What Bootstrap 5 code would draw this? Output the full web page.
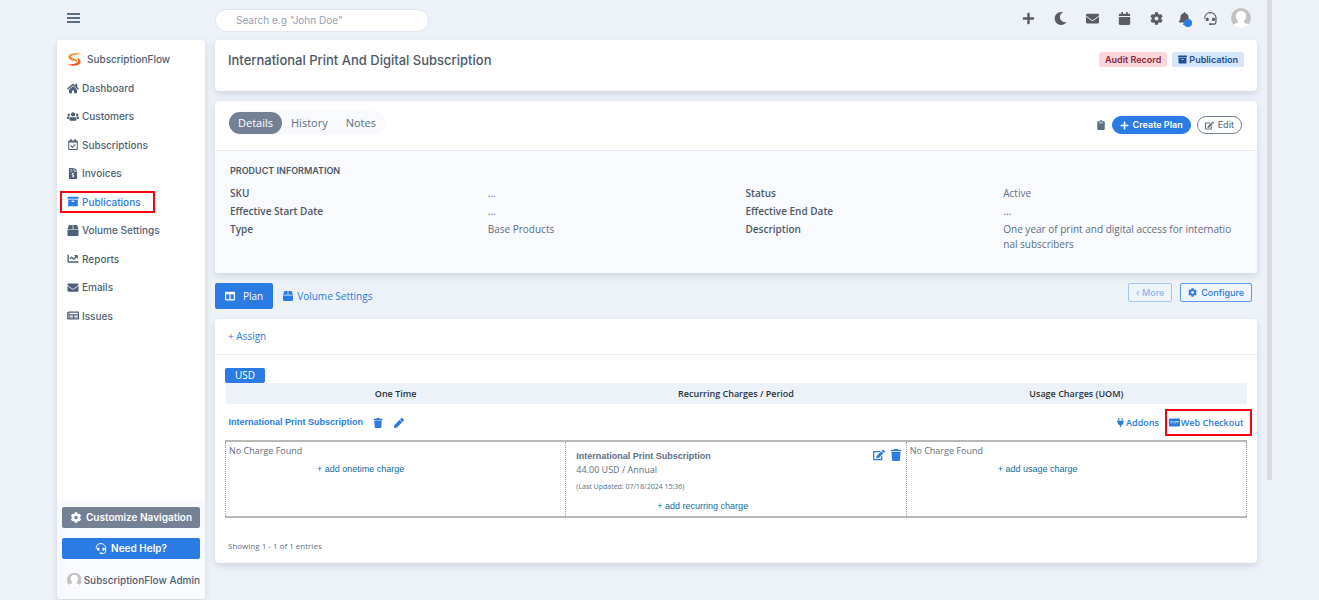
<!DOCTYPE html>
<html lang="en">
<head>
<meta charset="utf-8">
<meta name="viewport" content="width=device-width, initial-scale=1">
<title>SubscriptionFlow</title>
<link rel="stylesheet" href="https://cdn.jsdelivr.net/npm/bootstrap@5.3.0/dist/css/bootstrap.min.css">
<script defer src="https://cdn.jsdelivr.net/npm/bootstrap@5.3.0/dist/js/bootstrap.bundle.min.js"></script>
<style>
:root{--blue:#2a7be4;--ink:#4d5969;--slate:#748194;--head:Inter,"Open Sans",sans-serif}
body{background:#edf2f9;font:10px/15px "Open Sans","Noto Sans",sans-serif;color:#5e6e82}
a{text-decoration:none;color:var(--blue)}
.ic{width:1em;height:1em;fill:currentColor;flex:none;display:block}
.panel{background:#fff;border-radius:4px;box-shadow:0 3px 7px rgba(65,69,88,.16)}
.block{margin-top:10px}
.tiny{font-size:8px}
.arial{font-family:"Liberation Sans",Arial,sans-serif}
.marked{position:relative}
.marked::after{content:"";position:absolute;inset:-3px -14px -3px -7px;border:2px solid #f8000f;pointer-events:none}
.tool{border:0;background:none;padding:0;color:inherit}

/* page frame */
.shell{padding-left:57px;padding-right:47px;min-height:100vh}
.main-col{margin-left:10px;min-width:0}
.rail{flex:none;width:5px;height:80vh;background:#dcdcdc;margin-left:10px}

/* sidebar */
.side{width:148px;flex:none}
.burger{height:40px;padding:13px 10px;color:#5e6e82}
.burger span{display:block;width:13px;height:2px;margin-bottom:2px;background:currentColor}
.menu{font:500 10px/16px var(--head);color:#4f5f75}
.menu a{color:inherit}
.brand{height:38px;padding-left:10px;gap:5px}
.menu ul{min-height:247px;padding:2px 10px 0}
.menu li a{gap:3px}
.menu .ic{width:12px;height:11px}
.menu .marked{color:var(--blue)}
.foot{background:#f9fafd;border-radius:0 0 4px 4px;padding:7px 5px 8px;margin-top:175px}
.foot .blue{margin:10px 0 10px}
.fb{border:0;border-radius:2px;height:21px;color:#fff;font:600 10px/21px var(--head)}
.slate{background:var(--slate)}
.blue{background:var(--blue)}
.me{gap:2px;padding-left:5px;height:22px;white-space:nowrap}

/* top bar */
.topbar{height:40px;color:#5a5c60}
.topbar .ic{width:13px;height:13px}
.search{width:214px;height:23px;border:1px solid #dfe5ef;border-radius:12px;padding:0 20px;font:10px/20px var(--head);background:#fff}
.search::placeholder{color:#93a1b7;opacity:1}
.tools{gap:19px;padding:0 6px 4px 0}
.bellb{margin-left:-4px}
.bellb+.tool{margin-left:-6px}
.ava{margin-left:-5px}
.dot{position:absolute;right:-1px;bottom:-2px;width:8px;height:8px;border-radius:50%;background:var(--blue)}

/* title card */
.head{padding:11px 13px 22px}
.ttl{font:500 13px/18px var(--head);color:var(--ink)}
.tags{gap:5px;padding-top:1px}
.tag{border-radius:3px;padding:0 6px;height:15px;font:600 9px/15px var(--head)}
.tag .ic{width:9px;height:9px}
.tag.audit{background:#fad7dd;color:#932338}
.tag.pub{background:#d5e5fa;color:#1c4f93;gap:2px}

/* details card */
.dhead{padding:10px 15px 15px 14px}
.pills{background:#f9fafd;border-radius:13px;height:24px;padding:1px 0}
.pills button{border:0;background:none;color:#5e6e82;border-radius:12px;padding:0 9px;line-height:22px;font-size:11px}
.pills .on{background:var(--slate);color:#fff}
.acts{gap:6px;padding-top:4px;height:24px}
.round{border-radius:10px;height:18px;border:1px solid var(--slate);background:#fff;color:#67758a;padding:0 7px;font:500 9px/16px var(--head);gap:4px}
.round.go{background:var(--blue);border-color:var(--blue);color:#fff;font-weight:600}
.info{background:#f9fafd;border-top:1px solid #e6ebf5;border-radius:0 0 4px 4px;padding:12px 0 18px 15px}
.info h2{font:600 9px/15px var(--head);color:var(--ink);margin:0 0 8px}
.info dl{margin-right:-4px}
.info dt{font-weight:600;color:var(--ink)}
.info dd{margin:0;word-break:break-all;padding-right:26px}
.info .col-3{margin-bottom:3px}

/* tabs */
.tabs{gap:10px}
.plan{background:var(--blue);color:#fff;border-radius:2px;height:26px;padding:0 10px}
.cfg{padding-right:5px}
.sm{height:19px;border:1px solid #5d9bea;border-radius:2px;background:#f2f6fc;color:var(--blue);padding:0 7px;font:500 9px/17px var(--head)}

/* plan table */
.assign{padding:10px 13px;border-bottom:1px solid #e6ebf5}
.inner{padding:13px 10px 10px}
.usd{background:var(--blue);color:#fff;border-radius:2px;padding:0 10px;height:15px}
.grid{table-layout:fixed;width:100%;border-collapse:collapse}
.grid th{background:#edf2f9;color:#293340;font-size:9px;line-height:19px;text-align:center;font-weight:600}
.planrow{height:36px;padding:1px 3px 0;font-size:9px;font-weight:600}
.names{gap:9px}
.names .ic{width:12px;height:10px}
.links{gap:10px}
.links .ic{width:9px;margin-right:1px}
.links .wide{width:11px}
.checkout::after{inset:-6px -8px -6px -4px}
.charge{border-top:2px solid #b8b8b8;border-bottom:2px solid #b8b8b8;border-left:1px dotted #999;border-right:1px dotted #999;vertical-align:top;height:76px;padding:1px 3px;font-size:9px}
.add{border:0;background:none;padding:0;color:#0f6c9c;font:9px/14px "Liberation Sans",Arial,sans-serif}
.addrow{padding:3px 0 0 88px}
.mid{padding:7px 4px 0 10px;line-height:14px}
.mid .addrow{padding-left:81px}
.stamp{font-size:7px;line-height:19px}
.icons{gap:5px;font-size:12px}
.shown{margin-top:20px;padding-left:3px}
</style>
</head>
<body>
<svg width="0" height="0" class="position-absolute" aria-hidden="true"><defs>
<symbol id="plus" viewBox="0 0 448 512"><path d="M416 208H272V64c0-17.670-14.330-32-32-32h-32c-17.670 0-32 14.330-32 32v144H32c-17.670 0-32 14.330-32 32v32c0 17.670 14.330 32 32 32h144v144c0 17.670 14.330 32 32 32h32c17.670 0 32-14.330 32-32V304h144c17.670 0 32-14.330 32-32v-32c0-17.670-14.330-32-32-32z"/></symbol>
<symbol id="moon" viewBox="0 0 512 512"><path d="M283.211 512c78.962 0 151.079-35.925 198.857-94.792 7.068-8.708-.639-21.430-11.562-19.350-124.203 23.654-238.262-71.576-238.262-196.954 0-72.222 38.662-138.635 101.498-174.394 9.686-5.512 7.250-20.197-3.756-22.230A258.156 258.156 0 0 0 283.211 0c-141.309 0-256 114.511-256 256 0 141.309 114.511 256 256 256z"/></symbol>
<symbol id="mail" viewBox="0 0 512 512"><path d="M502.3 190.8c3.900-3.100 9.700-.2 9.700 4.700V400c0 26.500-21.500 48-48 48H48c-26.500 0-48-21.500-48-48V195.600c0-5 5.700-7.800 9.700-4.700 22.400 17.400 52.100 39.500 154.100 113.600 21.100 15.400 56.700 47.800 92.200 47.600 35.700.3 72-32.800 92.300-47.600 102-74.100 131.600-96.300 154-113.700zM256 320c23.200.4 56.600-29.200 73.400-41.400 132.700-96.300 142.800-104.700 173.400-128.700 5.800-4.500 9.200-11.500 9.200-18.900v-19c0-26.500-21.500-48-48-48H48c-26.500 0-48 21.500-48 48v19c0 7.400 3.400 14.300 9.200 18.900 30.600 23.900 40.700 32.400 173.400 128.700 16.800 12.200 50.200 41.800 73.400 41.400z"/></symbol>
<symbol id="cal" viewBox="0 0 448 512"><path d="M12 192h424c6.600 0 12 5.400 12 12v260c0 26.500-21.500 48-48 48H48c-26.500 0-48-21.500-48-48V204c0-6.600 5.400-12 12-12zm436-44v-36c0-26.500-21.500-48-48-48h-48V12c0-6.600-5.400-12-12-12h-40c-6.600 0-12 5.400-12 12v52H160V12c0-6.600-5.400-12-12-12h-40c-6.600 0-12 5.400-12 12v52H48C21.500 64 0 85.500 0 112v36c0 6.600 5.400 12 12 12h424c6.600 0 12-5.400 12-12z"/></symbol>
<symbol id="calcheck" viewBox="0 0 448 512"><path fill-rule="evenodd" d="M400 64h-48V12c0-7-5-12-12-12h-40c-7 0-12 5-12 12v52H160V12c0-7-5-12-12-12h-40c-7 0-12 5-12 12v52H48C22 64 0 86 0 112v352c0 27 22 48 48 48h352c27 0 48-21 48-48V112c0-26-21-48-48-48zm-6 400H54c-4 0-6-3-6-6V160h352v298c0 3-3 6-6 6zM197 421L98 322l38-38 61 61 117-117 38 38z"/></symbol>
<symbol id="cog" viewBox="0 0 512 512"><path d="M487.4 315.7l-42.600-24.600c4.300-23.200 4.300-47 0-70.200l42.600-24.600c4.900-2.800 7.100-8.600 5.500-14-11.100-35.600-30-67.800-54.700-94.600-3.800-4.100-10-5.100-14.800-2.300L380.800 110c-17.900-15.400-38.500-27.300-60.800-35.100V25.800c0-5.600-3.900-10.500-9.400-11.700-36.700-8.200-74.300-7.800-109.200 0-5.500 1.200-9.400 6.100-9.400 11.700V75c-22.200 7.900-42.800 19.800-60.800 35.100L88.700 85.500c-4.900-2.800-11-1.900-14.800 2.300-24.700 26.700-43.600 58.900-54.700 94.600-1.700 5.400.6 11.200 5.500 14L67.300 221c-4.300 23.200-4.300 47 0 70.200l-42.600 24.600c-4.900 2.800-7.100 8.600-5.500 14 11.100 35.600 30 67.800 54.700 94.600 3.800 4.100 10 5.100 14.800 2.300l42.600-24.600c17.900 15.400 38.500 27.300 60.800 35.100v49.200c0 5.600 3.900 10.500 9.400 11.700 36.700 8.200 74.300 7.800 109.200 0 5.500-1.200 9.400-6.100 9.400-11.700v-49.200c22.200-7.900 42.800-19.800 60.800-35.100l42.600 24.600c4.900 2.800 11 1.900 14.800-2.300 24.700-26.700 43.600-58.900 54.700-94.600 1.500-5.500-.7-11.300-5.600-14.100zM256 336c-44.100 0-80-35.900-80-80s35.900-80 80-80 80 35.900 80 80-35.900 80-80 80z"/></symbol>
<symbol id="bell" viewBox="0 0 448 512"><path d="M224 512c35.320 0 63.970-28.650 63.970-64H160.030c0 35.350 28.650 64 63.970 64zm215.390-149.710c-19.320-20.760-55.470-51.990-55.470-154.290 0-77.700-54.480-139.900-127.940-155.160V32c0-17.670-14.320-32-31.980-32s-31.980 14.330-31.980 32v20.840C118.560 68.100 64.080 130.300 64.080 208c0 102.300-36.150 133.530-55.470 154.290-6 6.450-8.660 14.160-8.610 21.710.11 16.400 12.980 32 32.100 32h383.800c19.120 0 32-15.600 32.100-32 .05-7.550-2.610-15.270-8.610-21.710z"/></symbol>
<symbol id="headset" viewBox="0 0 512 512"><path d="M32 262V226C32 112 126 26 248 26s220 92 224 206v150c0 58-42 98-100 98H250" fill="none" stroke="currentColor" stroke-width="46"/><path d="M120 222h36c20 0 30 12 30 30v76c0 18-10 30-30 30h-24c-36 0-62-28-62-66s20-70 50-70zM386 222h-36c-20 0-30 12-30 30v76c0 18 10 30 30 30h24c36 0 62-28 62-66s-20-70-50-70z"/><rect x="190" y="440" width="120" height="72" rx="36"/></symbol>
<symbol id="home" viewBox="0 0 576 512"><path d="M280.370 148.260L96 300.110V464a16 16 0 0 0 16 16l112.060-.29a16 16 0 0 0 15.920-16V368a16 16 0 0 1 16-16h64a16 16 0 0 1 16 16v95.640a16 16 0 0 0 16 16.050L464 480a16 16 0 0 0 16-16V300L295.670 148.260a12.190 12.190 0 0 0-15.300 0zM571.600 251.470L488 182.560V44.050a12 12 0 0 0-12-12h-56a12 12 0 0 0-12 12v72.610L318.470 43a48 48 0 0 0-61 0L4.340 251.470a12 12 0 0 0-1.600 16.900l25.500 31A12 12 0 0 0 45.150 301l235.220-193.740a12.190 12.190 0 0 1 15.300 0L530.900 301a12 12 0 0 0 16.900-1.600l25.500-31a12 12 0 0 0-1.700-16.930z"/></symbol>
<symbol id="users" viewBox="0 0 640 512"><circle cx="96" cy="160" r="64"/><circle cx="544" cy="160" r="64"/><circle cx="320" cy="144" r="112"/><path d="M64 256h64c18 0 34 7 45 19-40 22-68 61-74 109H32c-18 0-32-14-32-32v-32c0-35 29-64 64-64zM576 256h-64c-18 0-34 7-45 19 40 22 68 61 74 109h67c18 0 32-14 32-32v-32c0-35-29-64-64-64zM243 288h8c44 21 94 21 138 0h8c64 0 115 52 115 115v29c0 27-21 48-48 48H176c-27 0-48-21-48-48v-29c0-63 52-115 115-115z"/></symbol>
<symbol id="invoice" viewBox="0 0 384 512"><path fill-rule="evenodd" d="M24 0h200v136c0 13 11 24 24 24h136v328c0 13-11 24-24 24H24c-13 0-24-11-24-24V24C0 11 11 0 24 0zm40 64v32h96V64zm0 64v32h96v-32zm144 96h-32v24c-58 6-60 82-6 100 50 16 40 32 22 32-14 0-24-4-34-10l-22 24c12 10 26 16 40 18v26h32v-26c56-8 60-80 6-98-46-16-44-34-22-34 12 0 20 4 28 10l22-24c-10-8-22-16-34-18zM256 0h6l122 122v6H256z"/></symbol>
<symbol id="archive" viewBox="0 0 512 512"><path fill-rule="evenodd" d="M32 448c0 17.700 14.300 32 32 32h384c17.700 0 32-14.300 32-32V160H32v288zm160-212c0-6.600 5.400-12 12-12h104c6.600 0 12 5.400 12 12v28c0 6.600-5.400 12-12 12H204c-6.600 0-12-5.400-12-12v-28zM480 32H32C14.300 32 0 46.300 0 64v48c0 8.800 7.200 16 16 16h480c8.800 0 16-7.200 16-16V64c0-17.700-14.300-32-32-32z"/></symbol>
<symbol id="box" viewBox="0 0 512 512"><path d="M509.5 184.6L458.9 32.8C452.4 13.2 434.1 0 413.4 0H272v192h238.7c-.4-2.500-.4-5-1.200-7.400zM240 0H98.600c-20.700 0-39 13.200-45.500 32.800L2.500 184.600c-.8 2.400-.8 4.900-1.200 7.400H240V0zM0 224v240c0 26.500 21.500 48 48 48h416c26.500 0 48-21.500 48-48V224H0z"/></symbol>
<symbol id="chart" viewBox="0 0 512 512"><path d="M496 384H64V80c0-8.840-7.160-16-16-16H16C7.160 64 0 71.160 0 80v336c0 17.670 14.330 32 32 32h464c8.840 0 16-7.160 16-16v-32c0-8.840-7.160-16-16-16zM464 96H345.940c-21.380 0-32.090 25.850-16.970 40.970l32.400 32.400L288 242.750l-73.370-73.370c-12.500-12.500-32.760-12.500-45.250 0l-68.690 68.690c-6.250 6.250-6.250 16.380 0 22.630l22.620 22.620c6.250 6.250 16.380 6.250 22.630 0L192 237.250l73.370 73.370c12.500 12.500 32.760 12.500 45.250 0l96-96 32.400 32.400c15.120 15.120 40.970 4.410 40.970-16.970V112c.01-8.840-7.150-16-15.990-16z"/></symbol>
<symbol id="news" viewBox="0 0 576 512"><path fill-rule="evenodd" d="M552 64H88c-13 0-24 11-24 24v8H24c-13 0-24 11-24 24v272c0 31 25 56 56 56h472c27 0 48-21 48-48V88c0-13-11-24-24-24zM40 392V136h24v256c0 22-24 22-24 0zM120 120v64h400v-64zM120 224v36h170v-36zM120 290v36h170v-36zM120 356v36h170v-36zM340 224v36h180v-36zM340 290v36h180v-36zM340 356v36h180v-36z"/></symbol>
<symbol id="clip" viewBox="0 0 384 512"><path fill-rule="evenodd" d="M336 64h-80a64 64 0 0 0-128 0H48c-27 0-48 21-48 48v352c0 27 21 48 48 48h288c27 0 48-21 48-48V112c0-27-21-48-48-48zM192 40a24 24 0 1 1 0 48 24 24 0 0 1 0-48zM96 128h192v36H96z"/></symbol>
<symbol id="edit" viewBox="0 0 576 512"><path d="M402.600 83.200l90.200 90.200c3.800 3.800 3.800 10 0 13.800L274.400 405.600l-92.800 10.300c-12.400 1.400-22.900-9.100-21.500-21.500l10.300-92.800L388.800 83.200c3.800-3.800 10-3.800 13.800 0zm162-22.900l-48.800-48.800c-15.200-15.200-39.900-15.200-55.200 0l-35.400 35.400c-3.800 3.800-3.800 10 0 13.800l90.200 90.200c3.800 3.800 10 3.800 13.800 0l35.400-35.400c15.200-15.300 15.200-40 0-55.200zM384 346.200V448H64V128h229.800c3.200 0 6.200-1.300 8.500-3.500l40-40c7.600-7.600 2.200-20.500-8.500-20.500H48C21.500 64 0 85.500 0 112v352c0 26.500 21.500 48 48 48h352c26.500 0 48-21.500 48-48V306.200c0-10.700-12.900-16-20.500-8.500l-40 40c-2.200 2.300-3.500 5.300-3.500 8.500z"/></symbol>
<symbol id="columns" viewBox="0 0 512 512"><path d="M464 32H48C21.490 32 0 53.490 0 80v352c0 26.510 21.490 48 48 48h416c26.510 0 48-21.490 48-48V80c0-26.510-21.490-48-48-48zM224 416H64V160h160v256zm224 0H288V160h160v256z"/></symbol>
<symbol id="trash" viewBox="0 0 448 512"><path d="M432 32H312l-9.400-18.700A24 24 0 0 0 281.100 0H166.800a23.720 23.720 0 0 0-21.400 13.300L136 32H16A16 16 0 0 0 0 48v32a16 16 0 0 0 16 16h416a16 16 0 0 0 16-16V48a16 16 0 0 0-16-16zM53.200 467a48 48 0 0 0 47.900 45h245.800a48 48 0 0 0 47.900-45L416 128H32z"/></symbol>
<symbol id="pen" viewBox="0 0 512 512"><path d="M290.740 93.240l128.020 128.020-277.990 277.990-114.140 12.600C11.350 513.540-1.560 500.620.14 485.340l12.700-114.220 277.900-277.880zm207.200-19.060l-60.110-60.110c-18.750-18.750-49.160-18.750-67.910 0l-56.550 56.550 128.020 128.020 56.550-56.550c18.750-18.760 18.750-49.160 0-67.910z"/></symbol>
<symbol id="plug" viewBox="0 0 384 512"><path d="M64 32a32 32 0 0 1 64 0v110H64zM256 32a32 32 0 0 1 64 0v110h-64zM16 160h352c22 0 22 64 0 64h-16v32c0 77-55 142-128 157v99h-64v-99C87 398 32 333 32 256v-32H16c-22 0-22-64 0-64z"/></symbol>
<symbol id="pay" viewBox="0 0 640 512"><path fill-rule="evenodd" d="M40 30h560c22 0 40 18 40 40v372c0 22-18 40-40 40H40c-22 0-40-18-40-40V70c0-22 18-40 40-40zM90 170v40h120v-40zm0 80v60h60v-60zM270 170v130h40V170zM360 170v40h190v-40zm0 90v40h60v-40zm120 0v40h70v-40z"/></symbol>
<symbol id="avatar" viewBox="0 0 40 40"><circle cx="20" cy="20" r="20" fill="#c3c3c3"/><path fill="#fff" d="M20 6c6 0 10 4 10 10 0 5-2 8-4 10v3c5 2 8 3 9 5-8 8-22 8-30 0 1-2 4-3 9-5v-3c-2-2-4-5-4-10 0-6 4-10 10-10z"/></symbol>
</defs></svg>

<div class="shell d-flex align-items-start">
  <aside class="side">
    <div class="burger"><button class="tool d-block" aria-label="Toggle menu"><span></span><span></span><span></span></button></div>
    <nav class="panel menu d-flex flex-column">
      <a href="#" class="d-flex align-items-center brand">
        <svg width="15" height="13" viewBox="0 0 45 38"><path fill="#fb8a1e" d="M45 4C30-2 9-1 5 9c-3 8 5 12 13 13 6 1 10 2 10 6 5-5 2-9-5-11-8-2-14-5-9-9 6-4 18-5 31-4z"/><path fill="#f9521a" d="M0 34c15 6 36 5 40-5 3-8-3-13-11-14 5 5 7 9 2 13-6 5-18 6-31 6z"/></svg>
        SubscriptionFlow</a>
      <ul class="list-unstyled d-flex flex-column justify-content-between mb-0">
        <li><a href="#" class="d-inline-flex align-items-center"><svg class="ic"><use href="#home"/></svg>Dashboard</a></li>
        <li><a href="#" class="d-inline-flex align-items-center"><svg class="ic"><use href="#users"/></svg>Customers</a></li>
        <li><a href="#" class="d-inline-flex align-items-center"><svg class="ic"><use href="#calcheck"/></svg>Subscriptions</a></li>
        <li><a href="#" class="d-inline-flex align-items-center"><svg class="ic"><use href="#invoice"/></svg>Invoices</a></li>
        <li><a href="#" class="d-inline-flex align-items-center marked"><svg class="ic"><use href="#archive"/></svg>Publications</a></li>
        <li><a href="#" class="d-inline-flex align-items-center"><svg class="ic"><use href="#box"/></svg>Volume Settings</a></li>
        <li><a href="#" class="d-inline-flex align-items-center"><svg class="ic"><use href="#chart"/></svg>Reports</a></li>
        <li><a href="#" class="d-inline-flex align-items-center"><svg class="ic"><use href="#mail"/></svg>Emails</a></li>
        <li><a href="#" class="d-inline-flex align-items-center"><svg class="ic"><use href="#news"/></svg>Issues</a></li>
      </ul>
      <div class="foot">
        <button class="fb slate w-100 d-flex align-items-center justify-content-center gap-1 p-0"><svg class="ic"><use href="#cog"/></svg>Customize Navigation</button>
        <button class="fb blue w-100 d-flex align-items-center justify-content-center gap-1 p-0"><svg class="ic"><use href="#headset"/></svg>Need Help?</button>
        <a href="#" class="d-flex align-items-center me"><svg width="16" height="16"><use href="#avatar"/></svg>SubscriptionFlow Admin</a>
      </div>
    </nav>
  </aside>

  <main class="flex-grow-1 main-col">
    <header class="topbar d-flex align-items-center justify-content-between">
      <input class="search" type="search" aria-label="Search" placeholder="Search e.g &quot;John Doe&quot;">
      <div class="d-flex align-items-center tools">
        <button class="tool" aria-label="Add"><svg class="ic"><use href="#plus"/></svg></button>
        <button class="tool" aria-label="Dark mode"><svg class="ic"><use href="#moon"/></svg></button>
        <button class="tool" aria-label="Mail"><svg class="ic"><use href="#mail"/></svg></button>
        <button class="tool" aria-label="Calendar"><svg class="ic"><use href="#cal"/></svg></button>
        <button class="tool" aria-label="Settings"><svg class="ic"><use href="#cog"/></svg></button>
        <button class="tool position-relative bellb" aria-label="Notifications"><svg class="ic"><use href="#bell"/></svg><span class="dot"></span></button>
        <button class="tool" aria-label="Support"><svg class="ic"><use href="#headset"/></svg></button>
        <button class="tool ava" aria-label="Account"><svg class="d-block" width="20" height="20"><use href="#avatar"/></svg></button>
      </div>
    </header>

    <section class="panel head d-flex justify-content-between">
      <h1 class="ttl mb-0">International Print And Digital Subscription</h1>
      <div class="d-flex tags">
        <span class="tag audit">Audit Record</span>
        <span class="tag pub d-flex align-items-center"><svg class="ic"><use href="#archive"/></svg>Publication</span>
      </div>
    </section>

    <section class="panel block">
      <div class="d-flex justify-content-between dhead">
        <div class="pills d-flex"><button class="on">Details</button><button>History</button><button>Notes</button></div>
        <div class="d-flex align-items-center acts">
          <button class="tool" aria-label="Copy"><svg class="ic"><use href="#clip"/></svg></button>
          <button class="round go d-flex align-items-center"><svg class="ic"><use href="#plus"/></svg>Create Plan</button>
          <button class="round d-flex align-items-center"><svg class="ic"><use href="#edit"/></svg>Edit</button>
        </div>
      </div>
      <div class="info">
        <h2>PRODUCT INFORMATION</h2>
        <dl class="row gx-0 mb-0">
          <dt class="col-3">SKU</dt><dd class="col-3">...</dd><dt class="col-3">Status</dt><dd class="col-3">Active</dd>
          <dt class="col-3">Effective Start Date</dt><dd class="col-3">...</dd><dt class="col-3">Effective End Date</dt><dd class="col-3">...</dd>
          <dt class="col-3">Type</dt><dd class="col-3">Base Products</dd><dt class="col-3">Description</dt><dd class="col-3">One year of print and digital access for international subscribers</dd>
        </dl>
      </div>
    </section>

    <div class="d-flex justify-content-between align-items-start block">
      <div class="d-flex align-items-center tabs">
        <a href="#" class="plan d-flex align-items-center gap-1"><svg class="ic me-1"><use href="#columns"/></svg>Plan</a>
        <a href="#" class="d-flex align-items-center gap-1"><svg class="ic"><use href="#box"/></svg>Volume Settings</a>
      </div>
      <div class="d-flex gap-2 cfg">
        <button class="sm opacity-50">‹ More</button>
        <button class="sm d-flex align-items-center gap-1"><svg class="ic"><use href="#cog"/></svg>Configure</button>
      </div>
    </div>

    <section class="panel block">
      <div class="assign"><a href="#">+ Assign</a></div>
      <div class="inner">
        <div class="d-flex"><span class="usd">USD</span></div>
        <table class="grid">
          <thead><tr><th>One Time</th><th>Recurring Charges / Period</th><th>Usage Charges (UOM)</th></tr></thead>
          <tbody>
            <tr><td colspan="3" class="p-0"><div class="planrow d-flex align-items-center justify-content-between">
              <div class="d-flex align-items-center names"><a href="#" class="arial fw-bold">International Print Subscription</a><a href="#" aria-label="Delete"><svg class="ic"><use href="#trash"/></svg></a><a href="#" aria-label="Rename"><svg class="ic"><use href="#pen"/></svg></a></div>
              <div class="d-flex align-items-center links"><a href="#" class="d-flex align-items-center"><svg class="ic"><use href="#plug"/></svg>Addons</a><a href="#" class="d-flex align-items-center marked checkout"><svg class="ic wide"><use href="#pay"/></svg>Web Checkout</a></div>
            </div></td></tr>
            <tr>
              <td class="charge"><div>No Charge Found</div><div class="addrow"><button class="add">+ add onetime charge</button></div></td>
              <td class="charge mid"><div class="d-flex justify-content-between"><div><div class="arial fw-bold">International Print Subscription</div><div>44.00 USD / Annual</div><div class="stamp">(Last Updated: 07/18/2024 15:36)</div></div>
                <div class="d-flex icons"><a href="#" aria-label="Edit charge"><svg class="ic"><use href="#edit"/></svg></a><a href="#" aria-label="Delete charge"><svg class="ic"><use href="#trash"/></svg></a></div></div>
                <div class="addrow"><button class="add">+ add recurring charge</button></div></td>
              <td class="charge"><div>No Charge Found</div><div class="addrow"><button class="add">+ add usage charge</button></div></td>
            </tr>
          </tbody>
        </table>
        <div class="tiny shown">Showing 1 - 1 of 1 entries</div>
      </div>
    </section>
  </main>
  <div class="rail"></div>
</div>
</body>
</html>
